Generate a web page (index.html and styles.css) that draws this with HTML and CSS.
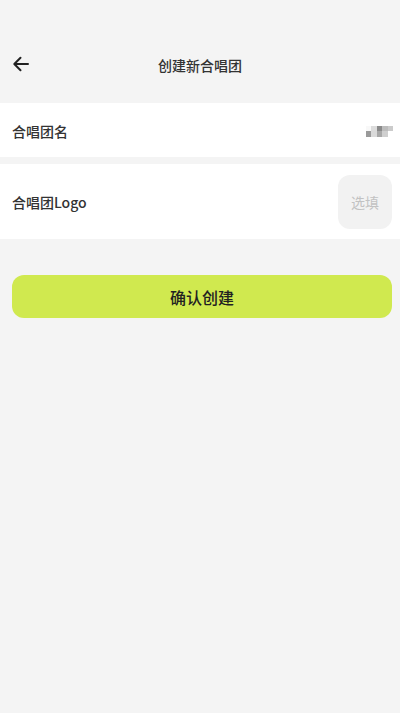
FILE: index.html
```html
<!DOCTYPE html>
<html lang="zh">
<head>
<meta charset="utf-8">
<link rel="stylesheet" href="styles.css">
</head>
<body>
<div class="page">
  <div class="status"></div>
  <header class="nav">
    <button class="back" aria-label="返回">
      <svg width="18" height="18" viewBox="0 0 18 18"><path d="M16 9H2.5M8.5 2.8L2.3 9l6.2 6.2" fill="none" stroke="#222" stroke-width="2" stroke-linecap="round" stroke-linejoin="round"/></svg>
    </button>
    <div class="title">创建新合唱团</div>
  </header>
  <section class="row row-name">
    <span class="label">合唱团名</span>
    <div class="mosaic">
      <i style="background:#f8f8f8"></i><i style="background:#dcdcdc"></i><i style="background:#8a8a8a"></i><i style="background:#bcbcbc"></i><i style="background:#cbcbcb"></i>
      <i style="background:#9a9a9a"></i><i style="background:#dadada"></i><i style="background:#a8a8a8"></i><i style="background:#cfcfcf"></i><i style="background:#ffffff"></i>
    </div>
  </section>
  <section class="row row-logo">
    <span class="label">合唱团Logo</span>
    <div class="upload">选填</div>
  </section>
  <div class="actions">
    <button class="submit">确认创建</button>
  </div>
</div>
</body>
</html>
```
FILE: styles.css
```css
html, body {
  margin: 0;
  padding: 0;
  background: #f4f4f4;
}
body {
  font-family: "Noto Sans CJK SC", "Noto Sans", sans-serif;
  color: #333;
}
.page {
  width: 400px;
  min-height: 713px;
  background: #f4f4f4;
}
.status {
  height: 40px;
}
.nav {
  position: relative;
  height: 48px;
  display: flex;
  align-items: center;
  justify-content: center;
  margin-bottom: 15px;
}
.back {
  position: absolute;
  left: 12px;
  top: 15px;
  width: 20px;
  height: 18px;
  padding: 0;
  border: 0;
  background: none;
  display: flex;
  align-items: center;
}
.title {
  font-size: 14px;
  font-weight: 500;
  color: #333;
  line-height: 20px;
  margin-top: 2px;
}
.row {
  background: #fff;
  display: flex;
  align-items: center;
  justify-content: space-between;
  padding: 0 8px 0 12px;
}
.row-name {
  height: 54px;
  margin-bottom: 7px;
}
.row-logo {
  padding-top: 11px;
  padding-bottom: 10px;
}
.label {
  font-size: 14px;
  font-weight: 500;
  color: #333;
  line-height: 20px;
}
.row-name .label {
  margin-top: 1px;
}
.mosaic {
  display: grid;
  grid-template-columns: repeat(5, 5.4px);
  grid-template-rows: repeat(2, 5.5px);
  margin-top: 2px;
  margin-right: -1px;
}
.mosaic i {
  display: block;
}
.upload {
  width: 54px;
  height: 54px;
  border-radius: 12px;
  background: #f2f2f2;
  color: #c2c2c2;
  font-size: 14px;
  display: flex;
  align-items: center;
  justify-content: center;
}
.actions {
  padding: 36px 8px 0 12px;
}
.submit {
  width: 100%;
  height: 43px;
  border: 0;
  border-radius: 12px;
  background: #d0e94f;
  color: #222;
  font-family: "Noto Sans CJK SC", "Noto Sans", sans-serif;
  font-size: 16px;
  font-weight: 500;
  padding: 0;
}
```
